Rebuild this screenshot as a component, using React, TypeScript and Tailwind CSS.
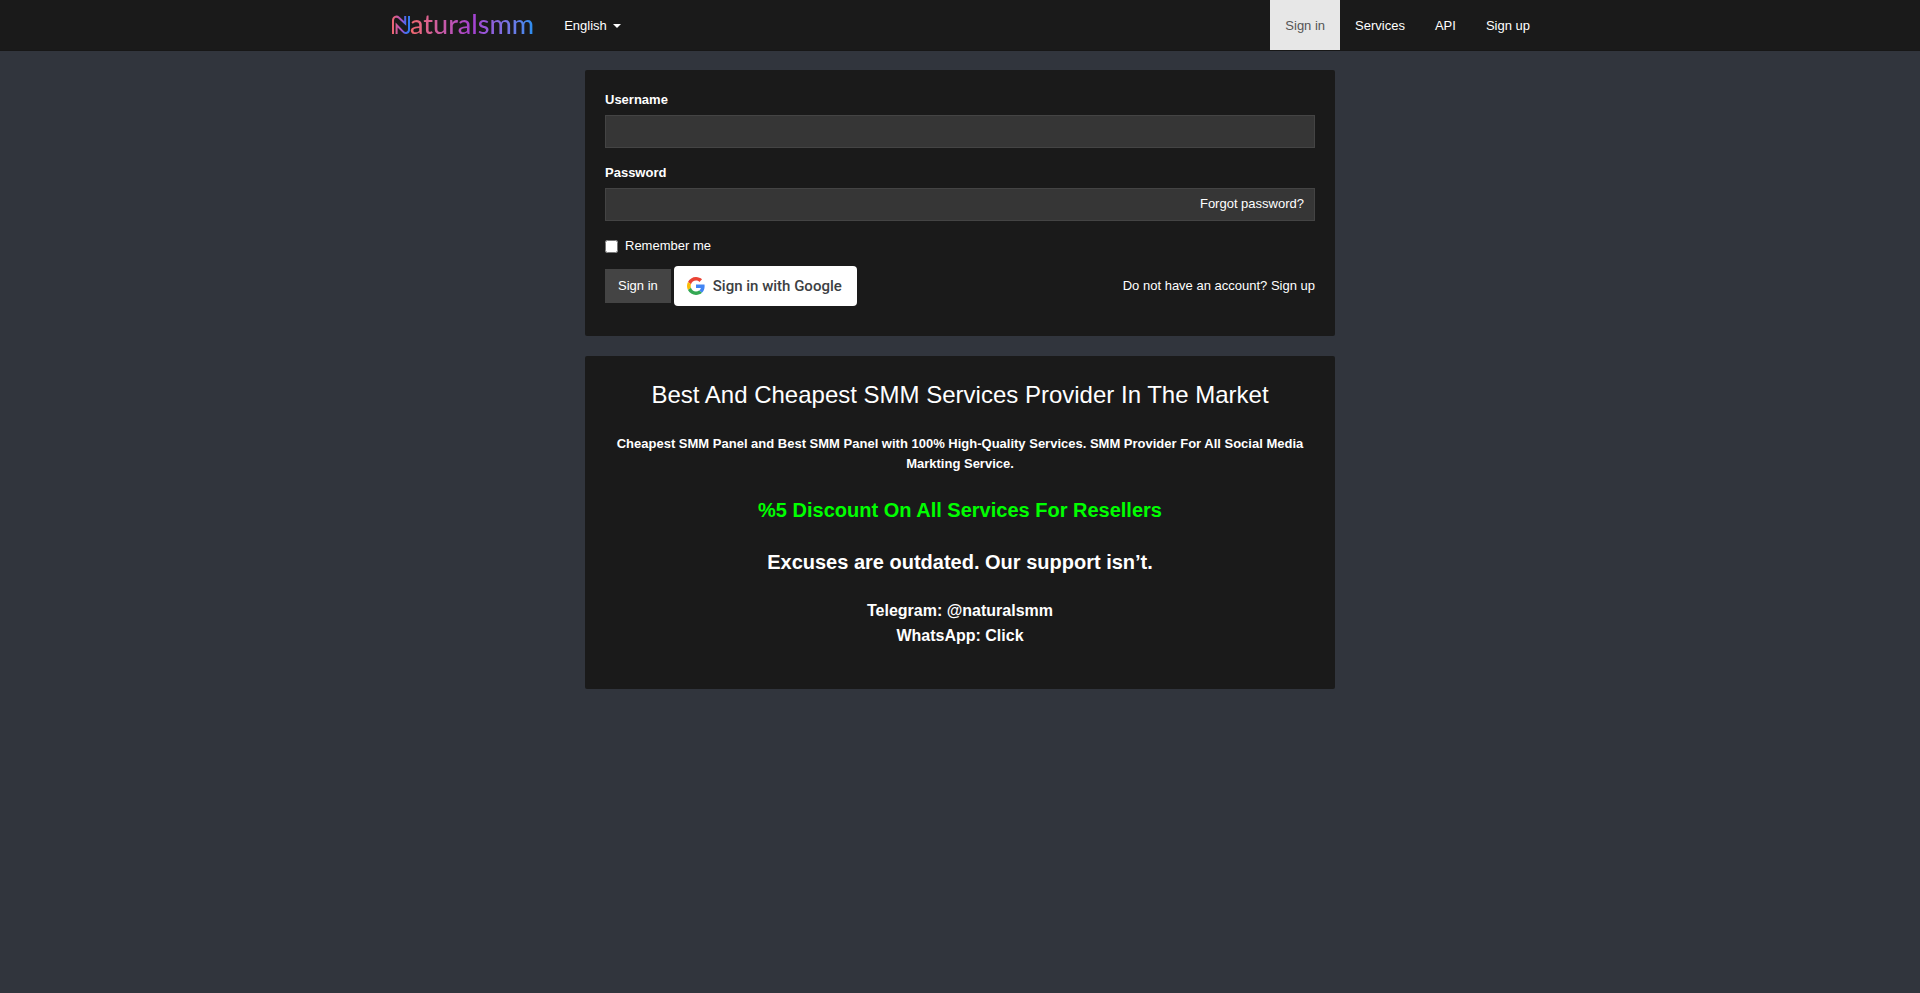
import React, { useState } from 'react';

const navLinks = [
  { label: 'Sign in', href: '#signin', active: true },
  { label: 'Services', href: '#services', active: false },
  { label: 'API', href: '#api', active: false },
  { label: 'Sign up', href: '#signup', active: false },
];

function Logo() {
  return (
    <a href="#home" aria-label="Naturalsmm" className="flex h-[50px] items-center pl-[2px]">
      <svg className="h-5 w-[18px]" viewBox="0 0 18 20" fill="none" stroke="url(#mark)" strokeWidth="2">
        <defs>
          <linearGradient id="mark" x1="0" y1="0" x2="18" y2="0" gradientUnits="userSpaceOnUse">
            <stop offset="0" stopColor="#f2686c" />
            <stop offset="0.5" stopColor="#b04fc0" />
            <stop offset="0.75" stopColor="#4a6cf0" />
            <stop offset="1" stopColor="#2f7df0" />
          </linearGradient>
        </defs>
        <path d="M1 19V5.6C1 1.6 4.6 0.6 7 2.8L13.2 8.4V1" />
        <path d="M4.6 19V10L10.8 16.4C13.4 19.2 17 17.8 17 14.4V1" />
      </svg>
      <span className="bg-gradient-to-r from-[#f2686c] via-[#a63fd0] to-[#1f8ff0] bg-clip-text pb-[2px] font-[Lato,sans-serif] text-[27px] leading-8 font-medium text-transparent">
        aturalsmm
      </span>
    </a>
  );
}

function GoogleIcon() {
  return (
    <svg className="h-[18px] w-[18px]" viewBox="0 0 48 48">
      <path fill="#EA4335" d="M24 9.5c3.54 0 6.71 1.22 9.21 3.6l6.85-6.85C35.9 2.38 30.47 0 24 0 14.62 0 6.51 5.38 2.56 13.22l7.98 6.19C12.43 13.72 17.74 9.5 24 9.5z" />
      <path fill="#4285F4" d="M46.98 24.55c0-1.57-.15-3.09-.38-4.55H24v9.02h12.94c-.58 2.96-2.26 5.48-4.78 7.18l7.73 6c4.51-4.18 7.09-10.36 7.09-17.65z" />
      <path fill="#FBBC05" d="M10.53 28.59c-.48-1.45-.76-2.99-.76-4.59s.27-3.14.76-4.59l-7.98-6.19C.92 16.46 0 20.12 0 24c0 3.88.92 7.54 2.56 10.78l7.97-6.19z" />
      <path fill="#34A853" d="M24 48c6.48 0 11.93-2.13 15.89-5.81l-7.73-6c-2.15 1.45-4.92 2.3-8.16 2.3-6.26 0-11.57-4.22-13.47-9.91l-7.98 6.19C6.51 42.62 14.62 48 24 48z" />
    </svg>
  );
}

function Navbar() {
  return (
    <nav className="border-b border-[#171717] bg-[#1a1a1a]">
      <div className="mx-auto flex max-w-[1170px] items-center justify-between pl-[15px]">
        <div className="flex items-center">
          <Logo />
          <button type="button" className="ml-[15px] flex items-center gap-[6px] px-[15px] pt-4 pb-[14px]">
            English
            <span className="border-x-4 border-t-4 border-x-transparent border-t-white"></span>
          </button>
        </div>
        <ul className="flex">
          {navLinks.map((link) => (
            <li key={link.label}>
              <a
                href={link.href}
                className={`block px-[15px] pt-4 pb-[14px] ${link.active ? 'bg-[#e7e7e7] text-[#555555]' : 'text-white'}`}
              >
                {link.label}
              </a>
            </li>
          ))}
        </ul>
      </div>
    </nav>
  );
}

function SignInForm() {
  const [username, setUsername] = useState('');
  const [password, setPassword] = useState('');
  const [remember, setRemember] = useState(false);

  return (
    <form
      className="rounded-[2px] bg-[#1a1a1a] px-5 pt-5 pb-[30px]"
      onSubmit={(e) => e.preventDefault()}
    >
      <div className="mb-[15px]">
        <label htmlFor="username" className="mb-[5px] block font-bold">Username</label>
        <input
          id="username"
          type="text"
          value={username}
          onChange={(e) => setUsername(e.target.value)}
          className="block h-[33px] w-full border border-[#444444] bg-[#363636] px-3 outline-none"
        />
      </div>
      <div className="mb-[15px]">
        <label htmlFor="password" className="mb-[5px] block font-bold">Password</label>
        <div className="flex h-[33px] border border-[#444444] bg-[#363636]">
          <input
            id="password"
            type="password"
            value={password}
            onChange={(e) => setPassword(e.target.value)}
            className="h-full min-w-0 flex-1 bg-transparent px-3 outline-none"
          />
          <a href="#forgot" className="px-[10px] pt-[5px]">Forgot password?</a>
        </div>
      </div>
      <label className="flex items-center gap-[7px]">
        <input
          type="checkbox"
          checked={remember}
          onChange={(e) => setRemember(e.target.checked)}
          className="h-[13px] w-[13px]"
        />
        Remember me
      </label>
      <div className="mt-[10px] flex items-center">
        <button type="submit" className="h-[34px] bg-[#444444] px-[13px]">Sign in</button>
        <button
          type="button"
          className="ml-[3px] flex h-10 items-center gap-2 rounded-[4px] bg-white pr-[15px] pl-[13px] font-[Roboto,sans-serif] text-[15px] font-medium text-[#3c4043]"
        >
          <GoogleIcon />
          Sign in with Google
        </button>
        <p className="ml-auto">
          Do not have an account? <a href="#signup">Sign up</a>
        </p>
      </div>
    </form>
  );
}

function Intro() {
  return (
    <section className="rounded-[2px] bg-[#1a1a1a] px-5 pt-5 pb-[41px] text-center">
      <h1 className="text-2xl leading-[38px]">Best And Cheapest SMM Services Provider In The Market</h1>
      <p className="mt-5 font-bold">
        Cheapest SMM Panel and Best SMM Panel with 100% High-Quality Services. SMM Provider For All Social Media Markting Service.
      </p>
      <p className="mt-5 text-xl leading-8 font-bold text-[#00ff00]">%5 Discount On All Services For Resellers</p>
      <p className="mt-5 text-xl leading-8 font-bold">Excuses are outdated. Our support isn’t.</p>
      <p className="mt-5 text-base leading-[25px] font-bold">
        Telegram: <a href="#telegram">@naturalsmm</a>
        <br />
        WhatsApp: <a href="#whatsapp">Click</a>
      </p>
    </section>
  );
}

export default function App() {
  return (
    <div className="min-h-screen bg-[#31353d] font-['Liberation_Sans',Arial,sans-serif] text-[13px] leading-5 text-white">
      <Navbar />
      <main className="mx-auto mt-[19px] flex max-w-[750px] flex-col gap-5">
        <SignInForm />
        <Intro />
      </main>
    </div>
  );
}
